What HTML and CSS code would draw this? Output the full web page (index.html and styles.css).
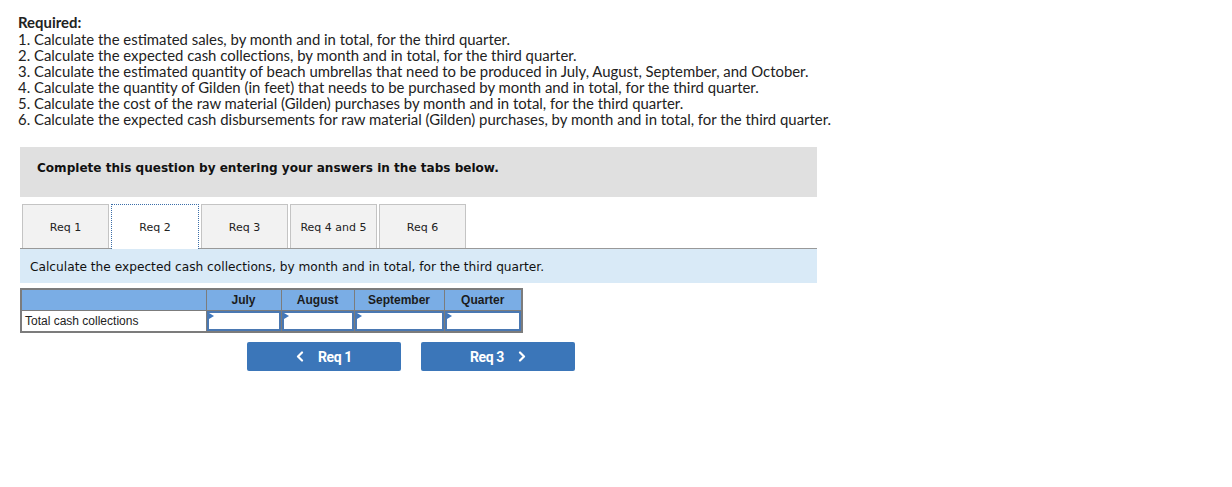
FILE: index.html
```html
<!DOCTYPE html>
<html>
<head>
<meta charset="utf-8">
<link rel="stylesheet" href="styles.css">
</head>
<body>
<div class="required">
  <div class="req-title">Required:</div>
  <div class="req-line">1. Calculate the estimated sales, by month and in total, for the third quarter.</div>
  <div class="req-line">2. Calculate the expected cash collections, by month and in total, for the third quarter.</div>
  <div class="req-line">3. Calculate the estimated quantity of beach umbrellas that need to be produced in July, August, September, and October.</div>
  <div class="req-line">4. Calculate the quantity of Gilden (in feet) that needs to be purchased by month and in total, for the third quarter.</div>
  <div class="req-line">5. Calculate the cost of the raw material (Gilden) purchases by month and in total, for the third quarter.</div>
  <div class="req-line">6. Calculate the expected cash disbursements for raw material (Gilden) purchases, by month and in total, for the third quarter.</div>
</div>

<div class="question">
  <div class="banner">Complete this question by entering your answers in the tabs below.</div>
  <div class="tabs">
    <div class="tab">Req 1</div>
    <div class="tab active">Req 2</div>
    <div class="tab">Req 3</div>
    <div class="tab">Req 4 and 5</div>
    <div class="tab">Req 6</div>
  </div>
  <div class="instruction">Calculate the expected cash collections, by month and in total, for the third quarter.</div>

  <table class="grid">
    <colgroup>
      <col class="c-label">
      <col class="c-july">
      <col class="c-aug">
      <col class="c-sep">
      <col class="c-q">
    </colgroup>
    <tr class="head">
      <th></th>
      <th>July</th>
      <th>August</th>
      <th>September</th>
      <th>Quarter</th>
    </tr>
    <tr class="body">
      <td class="label">Total cash collections</td>
      <td class="input"><span class="flag"></span></td>
      <td class="input"><span class="flag"></span></td>
      <td class="input"><span class="flag"></span></td>
      <td class="input"><span class="flag"></span></td>
    </tr>
  </table>

  <div class="nav">
    <div class="btn">
      <svg class="chev" width="8" height="11" viewBox="0 0 8 11"><polyline points="6,1.5 2,5.5 6,9.5" fill="none" stroke="#fff" stroke-width="2.2" stroke-linecap="round" stroke-linejoin="round"/></svg>
      <span>Req 1</span>
    </div>
    <div class="btn">
      <span>Req 3</span>
      <svg class="chev" width="8" height="11" viewBox="0 0 8 11"><polyline points="2,1.5 6,5.5 2,9.5" fill="none" stroke="#fff" stroke-width="2.2" stroke-linecap="round" stroke-linejoin="round"/></svg>
    </div>
  </div>
</div>
</body>
</html>
```
FILE: styles.css
```css
html, body {
  margin: 0;
  padding: 0;
  background: #ffffff;
}

.required {
  padding: 14px 0 0 18px;
  font-family: "Lato", "Liberation Sans", sans-serif;
  font-size: 14.9px;
  line-height: 16px;
  color: #222;
}

.req-title {
  font-weight: 700;
  line-height: 17px;
}

.question {
  margin: 20px 0 0 20px;
  width: 797px;
}

.banner {
  height: 50px;
  background: #e0e0e0;
  padding: 13px 0 0 17px;
  line-height: 16px;
  font-family: "DejaVu Sans", Verdana, sans-serif;
  font-weight: 700;
  font-size: 12.05px;
  color: #111;
  box-sizing: border-box;
}

.tabs {
  margin-top: 7px;
  display: flex;
  gap: 2px;
  padding-left: 2px;
  border-bottom: 1px solid #999;
  height: 44px;
}

.tab {
  width: 87px;
  height: 44px;
  box-sizing: border-box;
  background: #f2f2f2;
  border: 1px solid #c4c4c4;
  border-bottom: none;
  padding-top: 2px;
  display: flex;
  align-items: center;
  justify-content: center;
  font-family: "DejaVu Sans", Verdana, sans-serif;
  font-size: 11px;
  color: #222;
}

.tab.active {
  background: #fff;
  border: 1px dotted #3b6ea8;
  border-bottom: none;
  height: 45px;
  margin-bottom: -1px;
  padding-top: 2px;
  padding-bottom: 1px;
  width: 88px;
}

.instruction {
  height: 34px;
  box-sizing: border-box;
  background: #d9eaf7;
  display: flex;
  align-items: center;
  padding: 1px 0 0 10px;
  font-family: "DejaVu Sans", Verdana, sans-serif;
  font-size: 12.2px;
  color: #111;
}

.grid {
  margin-top: 5px;
  border-collapse: collapse;
  table-layout: fixed;
  width: 501px;
  font-family: "Liberation Sans", Arial, sans-serif;
  font-size: 12px;
  color: #222;
}

.c-label { width: 185px; }
.c-july { width: 75px; }
.c-aug { width: 73px; }
.c-sep { width: 90px; }
.c-q { width: 78px; }

.grid th {
  background: #7aade5;
  border: 1px solid #7c7c7c;
  height: 20px;
  padding: 0;
  font-weight: 700;
  font-size: 12px;
  text-align: center;
  color: #1c1c1c;
}

.grid .head th {
  border-top: 2px solid #7c7c7c;
}

.grid .head th:first-child { border-left: 2px solid #7c7c7c; }
.grid .head th:last-child { border-right: 2px solid #7c7c7c; }

.grid td {
  height: 20px;
  padding: 0;
  border: 1px solid #7c7c7c;
  border-bottom: 2px solid #7c7c7c;
}

.grid td.label {
  padding-left: 3px;
  border-left: 2px solid #7c7c7c;
  text-align: left;
}

.grid td.input {
  position: relative;
  background: #fff;
  box-shadow: inset 0 0 0 2px #4a78b2;
}

.grid td.input:last-child {
  border-right: 2px solid #7c7c7c;
}

.flag {
  position: absolute;
  left: 2px;
  top: 2px;
  width: 0;
  height: 0;
  border-top: 3px solid transparent;
  border-bottom: 3px solid transparent;
  border-left: 5px solid #3f77bd;
}

.nav {
  margin-top: 9px;
  padding-left: 227px;
  display: flex;
  gap: 20px;
}

.btn {
  width: 154px;
  height: 29px;
  background: #3b76b9;
  border-radius: 2px;
  display: flex;
  align-items: center;
  justify-content: center;
  gap: 14px;
  font-family: "Roboto", "Liberation Sans", Arial, sans-serif;
  font-weight: 700;
  font-size: 14px;
  letter-spacing: -0.4px;
  color: #fff;
}

.chev {
  display: block;
}
```
